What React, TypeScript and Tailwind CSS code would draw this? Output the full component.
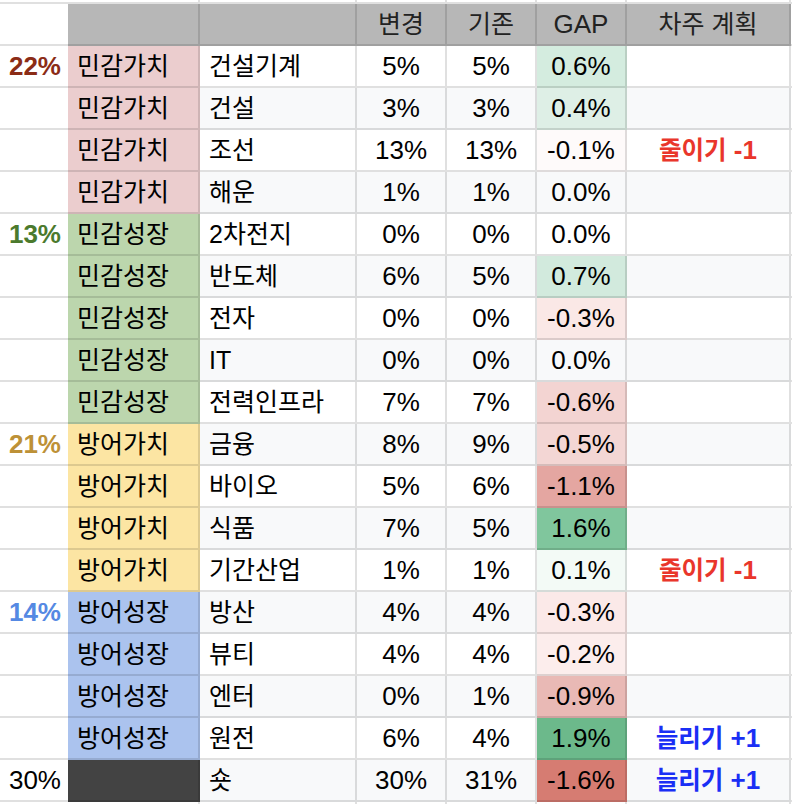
import React from 'react';

interface RowData {
    pct?: string;
    pctColor?: string;
    cat: string;
    catBg: string;
    name: string;
    cur: string;
    prev: string;
    gap: string;
    gapBg?: string;
    plan?: 'down' | 'up';
}

const PINK = 'bg-[#ebcdce]';
const GREEN = 'bg-[#bcd6ad]';
const YELLOW = 'bg-[#fce5a3]';
const BLUE = 'bg-[#abc3ee]';

const rows: RowData[] = [
    { pct: '22%', pctColor: 'text-[#8b2c16] font-bold', cat: '민감가치', catBg: PINK, name: '건설기계', cur: '5%', prev: '5%', gap: '0.6%', gapBg: 'bg-[#d4ecdf]' },
    { cat: '민감가치', catBg: PINK, name: '건설', cur: '3%', prev: '3%', gap: '0.4%', gapBg: 'bg-[#deefe6]' },
    { cat: '민감가치', catBg: PINK, name: '조선', cur: '13%', prev: '13%', gap: '-0.1%', gapBg: 'bg-[#fefafa]', plan: 'down' },
    { cat: '민감가치', catBg: PINK, name: '해운', cur: '1%', prev: '1%', gap: '0.0%' },
    { pct: '13%', pctColor: 'text-[#4b7a2d] font-bold', cat: '민감성장', catBg: GREEN, name: '2차전지', cur: '0%', prev: '0%', gap: '0.0%' },
    { cat: '민감성장', catBg: GREEN, name: '반도체', cur: '6%', prev: '5%', gap: '0.7%', gapBg: 'bg-[#d2eadd]' },
    { cat: '민감성장', catBg: GREEN, name: '전자', cur: '0%', prev: '0%', gap: '-0.3%', gapBg: 'bg-[#fae8e6]' },
    { cat: '민감성장', catBg: GREEN, name: 'IT', cur: '0%', prev: '0%', gap: '0.0%' },
    { cat: '민감성장', catBg: GREEN, name: '전력인프라', cur: '7%', prev: '7%', gap: '-0.6%', gapBg: 'bg-[#f3d4d2]' },
    { pct: '21%', pctColor: 'text-[#bd9137] font-bold', cat: '방어가치', catBg: YELLOW, name: '금융', cur: '8%', prev: '9%', gap: '-0.5%', gapBg: 'bg-[#f3d6d4]' },
    { cat: '방어가치', catBg: YELLOW, name: '바이오', cur: '5%', prev: '6%', gap: '-1.1%', gapBg: 'bg-[#e4a6a1]' },
    { cat: '방어가치', catBg: YELLOW, name: '식품', cur: '7%', prev: '5%', gap: '1.6%', gapBg: 'bg-[#80c69d]' },
    { cat: '방어가치', catBg: YELLOW, name: '기간산업', cur: '1%', prev: '1%', gap: '0.1%', gapBg: 'bg-[#f3faf6]', plan: 'down' },
    { pct: '14%', pctColor: 'text-[#5589e3] font-bold', cat: '방어성장', catBg: BLUE, name: '방산', cur: '4%', prev: '4%', gap: '-0.3%', gapBg: 'bg-[#fbe9e8]' },
    { cat: '방어성장', catBg: BLUE, name: '뷰티', cur: '4%', prev: '4%', gap: '-0.2%', gapBg: 'bg-[#fcedec]' },
    { cat: '방어성장', catBg: BLUE, name: '엔터', cur: '0%', prev: '1%', gap: '-0.9%', gapBg: 'bg-[#e9b9b5]' },
    { cat: '방어성장', catBg: BLUE, name: '원전', cur: '6%', prev: '4%', gap: '1.9%', gapBg: 'bg-[#6cb98b]', plan: 'up' },
    { pct: '30%', pctColor: 'text-black', cat: '', catBg: 'bg-[#434343]', name: '숏', cur: '30%', prev: '31%', gap: '-1.6%', gapBg: 'bg-[#d67c72]', plan: 'up' },
];

const line = 'border-[rgba(0,0,0,0.12)]';
const cell = `flex items-center border-b-2 border-r-2 ${line}`;
const edge = `border-b-2 ${line}`;
const gridCols = 'grid grid-cols-[68px_132px_157px_90px_90px_90px_164px_1px]';

const Plan: React.FC<{ kind: 'down' | 'up' }> = ({ kind }) =>
    kind === 'down' ? (
        <span className="font-bold text-[#e9362b]">
            <span className="text-[24.5px]">줄이기</span> -1
        </span>
    ) : (
        <span className="font-bold text-[#1a2ff5]">
            <span className="text-[24.5px]">늘리기</span> +1
        </span>
    );

const DataRow: React.FC<{ row: RowData; index: number }> = ({ row, index }) => {
    const bg = index % 2 === 1 ? 'bg-[#f8f9fa]' : 'bg-white';
    return (
        <div className={`${gridCols} h-[42px]`}>
            <div className={`${edge} bg-white flex items-center justify-end pr-[7px] ${row.pctColor ?? ''}`}>{row.pct}</div>
            <div className={`${cell} ${row.catBg} pl-[9px] text-[25px]`}>{row.cat}</div>
            <div className={`${cell} ${bg} pl-[9px] text-[25px]`}>{row.name}</div>
            <div className={`${cell} ${bg} justify-center`}>{row.cur}</div>
            <div className={`${cell} ${bg} justify-center`}>{row.prev}</div>
            <div className={`${cell} ${row.gapBg ?? bg} justify-center`}>{row.gap}</div>
            <div className={`${cell} ${bg} justify-center`}>{row.plan && <Plan kind={row.plan} />}</div>
            <div className={`${edge} bg-white`} />
        </div>
    );
};

const BlankRow: React.FC<{ height: string }> = ({ height }) => (
    <div className={`${gridCols} ${height}`}>
        <div className={edge} />
        {[0, 1, 2, 3, 4, 5].map((i) => (
            <div key={i} className={`border-b-2 border-r-2 ${line}`} />
        ))}
        <div className={edge} />
    </div>
);

const App: React.FC = () => (
    <div className="w-[792px] h-[804px] overflow-hidden bg-white text-black text-[26px] leading-none font-['Liberation_Sans','Noto_Sans_CJK_KR',sans-serif]">
        <BlankRow height="h-[4px]" />
        <div className={`${gridCols} h-[42px]`}>
            <div className={`${edge} bg-white`} />
            <div className={`${cell} bg-[#b7b7b7]`} />
            <div className={`${cell} bg-[#b7b7b7]`} />
            <div className={`${cell} bg-[#b7b7b7] justify-center text-[25px] text-[#222]`}>변경</div>
            <div className={`${cell} bg-[#b7b7b7] justify-center text-[25px] text-[#222]`}>기존</div>
            <div className={`${cell} bg-[#b7b7b7] justify-center text-[#222]`}>GAP</div>
            <div className={`${cell} bg-[#b7b7b7] justify-center text-[25px] text-[#222]`}>차주 계획</div>
            <div className={`${edge} bg-white`} />
        </div>
        {rows.map((row, i) => (
            <DataRow key={i} row={row} index={i} />
        ))}
        <BlankRow height="h-[42px]" />
    </div>
);

export default App;
